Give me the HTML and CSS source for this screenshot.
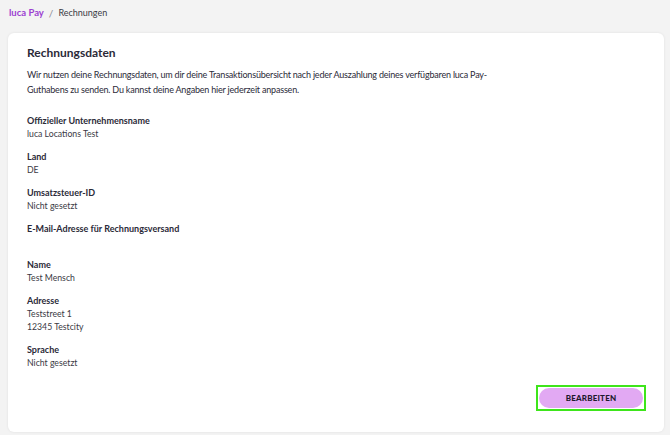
FILE: index.html
```html
<!DOCTYPE html>
<html lang="de">
<head>
<meta charset="utf-8">
<link rel="stylesheet" href="styles.css">
</head>
<body>
<nav class="crumbs">
  <a class="crumb-link">luca Pay</a>
  <span class="sep">/</span>
  <span class="crumb-current">Rechnungen</span>
</nav>
<main class="card">
  <h1 class="title">Rechnungsdaten</h1>
  <p class="intro">Wir nutzen deine Rechnungsdaten, um dir deine Transaktionsübersicht nach jeder Auszahlung deines verfügbaren luca Pay-<br>Guthabens zu senden. Du kannst deine Angaben hier jederzeit anpassen.</p>
  <dl class="fields">
    <div class="field"><dt>Offizieller Unternehmensname</dt><dd>luca Locations Test</dd></div>
    <div class="field"><dt>Land</dt><dd>DE</dd></div>
    <div class="field"><dt>Umsatzsteuer-ID</dt><dd>Nicht gesetzt</dd></div>
    <div class="field"><dt>E-Mail-Adresse für Rechnungsversand</dt><dd>&nbsp;</dd></div>
    <div class="field"><dt>Name</dt><dd>Test Mensch</dd></div>
    <div class="field"><dt>Adresse</dt><dd>Teststreet 1</dd><dd>12345 Testcity</dd></div>
    <div class="field"><dt>Sprache</dt><dd>Nicht gesetzt</dd></div>
  </dl>
  <div class="actions">
    <div class="focus-ring"><button class="btn">BEARBEITEN</button></div>
  </div>
</main>
</body>
</html>
```
FILE: styles.css
```css
html, body {
  margin: 0;
  padding: 0;
}
body {
  background: #f3f3f3;
  font-family: Lato, "Noto Sans", sans-serif;
  color: #2b2a38;
  width: 670px;
  height: 435px;
  overflow: hidden;
}
.crumbs {
  display: flex;
  align-items: center;
  gap: 5px;
  padding: 5px 0 0 9px;
  height: 15px;
}
.crumb-link {
  color: #9b3fd1;
  font-weight: 700;
  font-size: 9.5px;
}
.sep {
  color: #8a8a94;
  font-size: 10px;
}
.crumb-current {
  color: #3a3a44;
  font-size: 9px;
}
.card {
  margin: 13px 6px 3px 8px;
  background: #fff;
  border-radius: 6px;
  box-shadow: 0 0 3px rgba(0,0,0,0.08);
  padding: 12px 19px 21px 19px;
  height: 399px;
  box-sizing: border-box;
  display: flex;
  flex-direction: column;
}
.title {
  margin: 0;
  font-size: 12px;
  font-weight: 700;
  line-height: 16px;
}
.intro {
  margin: 6px 0 0;
  font-size: 9px;
  letter-spacing: -0.2px;
  line-height: 15px;
}
.fields {
  margin: 17px 0 0;
  display: flex;
  flex-direction: column;
  gap: 10px;
}
.field dt {
  font-size: 9px;
  font-weight: 700;
  line-height: 13px;
}
.field dd {
  margin: 0;
  font-size: 8.7px;
  line-height: 13px;
  color: #3a3a44;
}
.actions {
  margin-top: auto;
  display: flex;
  justify-content: flex-end;
}
.focus-ring {
  border: 2px solid #3ee51b;
  padding: 1px;
  margin-right: -1px;
}
.btn {
  display: block;
  width: 104px;
  height: 20px;
  border: none;
  border-radius: 10px;
  background: #e2a9f3;
  color: #1e1a2e;
  font-family: Lato, "Noto Sans", sans-serif;
  font-weight: 900;
  font-size: 8px;
  letter-spacing: 0.2px;
  padding: 0;
}
```
